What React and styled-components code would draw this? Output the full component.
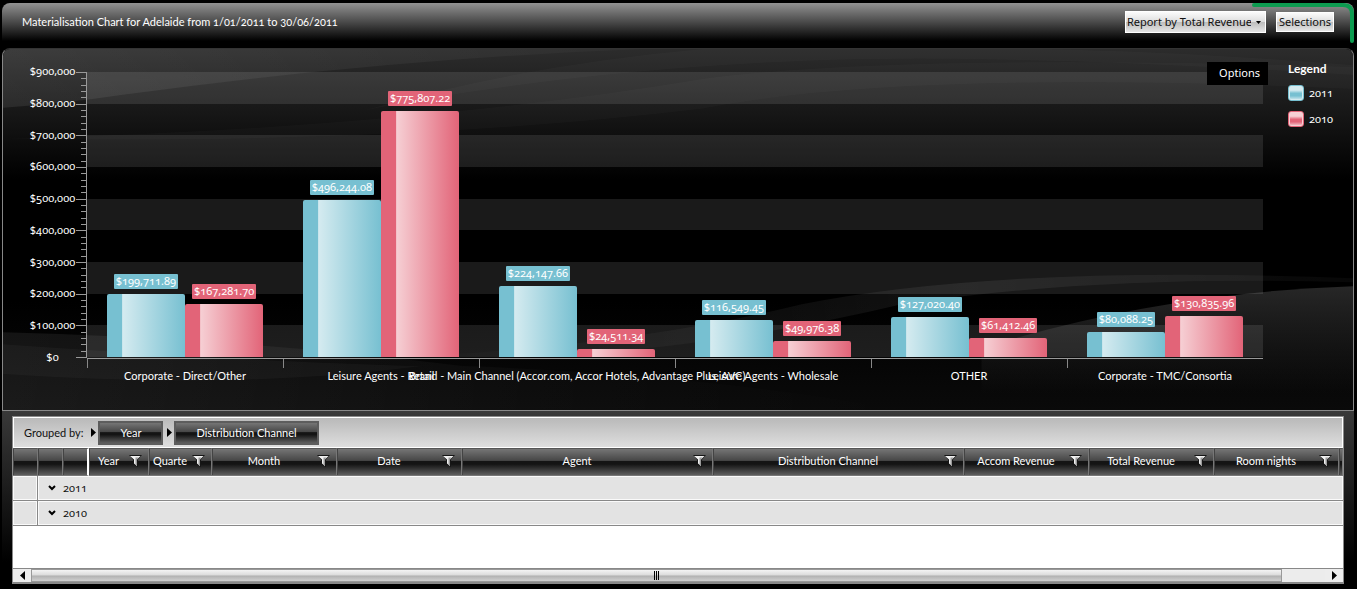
import React from 'react';
import styled, { createGlobalStyle } from 'styled-components';

const TEXT = 'Lato, "Liberation Sans", sans-serif';
const NUMBERS = '"Noto Sans", Lato, sans-serif';

const Global = createGlobalStyle`
  * { box-sizing: border-box; }
  body {
    margin: 0;
    background: #000;
    color: #fff;
    font: 11px/16px ${TEXT};
    font-variant-numeric: oldstyle-nums;
  }
  button, select { font: inherit; font-variant-numeric: inherit; }
`;

const Page = styled.div`
  display: flex;
  flex-direction: column;
  min-height: 100vh;
  padding: 3px 3px 0 2px;
`;

/* ---------- header ---------- */

const Header = styled.header`
  position: relative;
  display: flex;
  align-items: center;
  height: 38px;
  padding: 0 20px;
  border-radius: 8px 8px 0 0;
  background: linear-gradient(#929292, #4a4a4a 50%, #000);
`;

const Title = styled.h1`
  flex: 1;
  margin: 0;
  font-size: 11px;
  font-weight: 400;
`;

const HeaderTools = styled.div`
  display: flex;
  align-items: center;
  gap: 10px;
`;

const SelectWrap = styled.label`
  position: relative;
  display: flex;
  svg {
    position: absolute;
    right: 5px;
    top: 10px;
    pointer-events: none;
  }
`;

const glossyLight = 'linear-gradient(#fbfbfb, #dedede 48%, #bdbdbd 52%, #e6e6e6)';

const ReportSelect = styled.select`
  appearance: none;
  width: 141px;
  height: 22px;
  padding: 0 14px 0 1px;
  border: 1px solid #fff;
  border-radius: 0;
  color: #111;
  font-family: ${NUMBERS};
  background: ${glossyLight};
`;

const LightButton = styled.button`
  height: 20px;
  padding: 0 2px;
  border: 1px solid #fff;
  color: #111;
  font-family: ${NUMBERS};
  line-height: 16px;
  background: ${glossyLight};
`;

const CornerAccent = styled.svg`
  position: absolute;
  top: 0;
  right: 0;
`;

const HiddenText = styled.span`
  position: absolute;
  width: 1px;
  height: 1px;
  overflow: hidden;
  clip-path: inset(50%);
`;

/* ---------- chart ---------- */

const ChartPanel = styled.section`
  position: relative;
  display: grid;
  grid-template-columns: 84px 1fr 90px;
  grid-template-rows: auto 52px;
  margin-top: 7px;
  padding-top: 12px;
  border: 1px solid #888;
  border-top-color: #333;
  border-radius: 8px 8px 0 0;
  overflow: hidden;
  background: #000;
`;

const Waves = styled.svg`
  position: absolute;
  inset: 0;
  width: 100%;
  height: 100%;
`;

const Axis = styled.div`
  position: relative;
  display: flex;
  margin-top: 11px;
  padding-left: 26px;
`;

const AxisLabels = styled.div`
  flex: 1;
  display: flex;
  flex-direction: column;
  justify-content: space-between;
  margin: -8px 0;
  text-align: center;
  font-family: ${NUMBERS};
  line-height: 14px;
  padding-bottom: 2px;
  white-space: nowrap;
`;

const Ticks = styled.svg`
  width: 11px;
  height: 286px;
`;

const Plot = styled.div`
  position: relative;
  height: 285px;
  margin-top: 11px;
`;

const Bands = styled.div`
  display: flex;
  flex-direction: column;
  height: 100%;
`;

const Band = styled.div`
  flex: 1;
  background: ${(p) => (p.$lit ? 'rgba(255, 255, 255, 0.1)' : 'transparent')};
`;

const Groups = styled.div`
  position: absolute;
  inset: 0;
  display: flex;
`;

const Group = styled.div`
  flex: 1;
  display: flex;
  padding: 0 calc(100% / 60);
`;

const BarSlot = styled.div`
  flex: 1;
  display: flex;
  flex-direction: column;
  align-items: center;
  justify-content: flex-end;
`;

const series = {
  2011: { base: '#77c0d1', light: '#d5ebf0' },
  2010: { base: '#e26478', light: '#f6cfd4' },
};

const Bar = styled.div`
  flex-shrink: 0;
  width: 100%;
  border-radius: 2px 2px 0 0;
  background: ${(p) => {
    const { base, light } = series[p.$year];
    return `linear-gradient(90deg, ${base} 19%, ${light} 20%, ${base})`;
  }};
`;

const ValueTag = styled.span`
  margin-bottom: 5px;
  padding: 0 2px 2px;
  border-radius: 1px;
  font-family: ${NUMBERS};
  line-height: 13px;
  background: ${(p) => series[p.$year].base};
`;

const OptionsButton = styled.button`
  position: absolute;
  top: -10px;
  right: -5px;
  height: 23px;
  padding: 0 8px 2px 12px;
  border: 0;
  color: #fff;
  font-family: ${NUMBERS};
  background: #000;
`;

const Legend = styled.aside`
  position: relative;
  padding-left: 25px;
`;

const LegendTitle = styled.h2`
  margin: 0 0 8px;
  font-size: 12px;
  line-height: 16px;
  font-weight: 700;
`;

const LegendItem = styled.div`
  display: flex;
  align-items: center;
  gap: 5px;
  margin-bottom: 10px;
  font-family: ${NUMBERS};
  line-height: 14px;
`;

const Swatch = styled.span`
  width: 16px;
  height: 16px;
  border: 1px solid ${(p) => series[p.$year].base};
  border-radius: 3px;
  box-shadow: inset 0 0 0 1px ${(p) => series[p.$year].light};
  background: ${(p) => {
    const { base, light } = series[p.$year];
    return `linear-gradient(${light}, ${light} 30%, ${base} 52%, ${base} 70%, ${light})`;
  }};
`;

const Categories = styled.div`
  position: relative;
  grid-column: 2;
  display: flex;
  border-top: 1px solid #999;
`;

const Category = styled.div`
  flex: 1;
  min-width: 0;
`;

const CategoryTick = styled.div`
  height: 9px;
  border-left: 1px solid #888;
`;

const CategoryName = styled.div`
  display: flex;
  justify-content: center;
  white-space: nowrap;
`;

/* ---------- data grid ---------- */

const GridPanel = styled.section`
  flex: 1;
  display: flex;
  padding: 5px 10px;
  background: linear-gradient(#393939, #000 85%);
`;

const GridBox = styled.div`
  flex: 1;
  min-width: 0;
  display: flex;
  flex-direction: column;
  border: 1px solid #8a8a8a;
  background: #fff;
  color: #111;
`;

const GroupBar = styled.div`
  display: flex;
  align-items: center;
  height: 31px;
  padding: 0 10px;
  border: 1px solid #fff;
  background: linear-gradient(#b9b9b9, #dedede);
`;

const GroupLabel = styled.span`
  margin-right: 8px;
`;

const Arrow = styled.svg`
  flex-shrink: 0;
`;

const glossyDark = 'linear-gradient(#757575, #474747 44%, #141414 48%, #141414 58%, #5e5e5e)';

const GroupChip = styled.button`
  height: 24px;
  margin: 0 4px 0 2px;
  padding: 0 20px;
  border: 2px solid #5d5d5d;
  color: #fff;
  background: ${glossyDark};
`;

const Table = styled.table`
  width: 100%;
  table-layout: fixed;
  border-spacing: 0;
`;

const HeadCell = styled.th`
  height: 28px;
  padding: 0;
  border-top: 1px solid #555;
  border-right: ${(p) => (p.$divider ? '2px solid #fff' : '1px solid #777')};
  border-bottom: 1px solid #777;
  box-shadow: inset 1px 0 #444;
  color: #fff;
  font-weight: 400;
  background: ${glossyDark};
`;

const HeadInner = styled.div`
  display: flex;
  align-items: center;
  padding: 0 6px 2px 4px;
`;

const HeadLabel = styled.span`
  flex: 1;
  overflow: hidden;
  white-space: nowrap;
  text-align: center;
`;

const FilterButton = styled.button`
  display: flex;
  margin-left: 5px;
  padding: 0;
  border: 0;
  background: none;
`;

const RowMarker = styled.td`
  height: 25px;
  padding: 0;
  border-right: 1px solid #888;
  border-bottom: 1px solid #888;
  box-shadow: inset 0 0 0 1px #fafafa;
  background: #e3e3e3;
`;

const GroupCell = styled.td`
  height: 25px;
  padding: 0 10px;
  border-bottom: 1px solid #888;
  box-shadow: inset 0 0 0 1px #fafafa;
  background: #e3e3e3;
  font-family: ${NUMBERS};
`;

const Expander = styled.button`
  display: flex;
  align-items: center;
  gap: 7px;
  padding: 0;
  border: 0;
  color: #111;
  background: none;
`;

const Scrollbar = styled.div`
  display: flex;
  height: 15px;
  margin-top: auto;
  border-top: 1px solid #888;
  border-bottom: 1px solid #888;
  background: #ececec;
`;

const ScrollArrow = styled.button`
  display: flex;
  align-items: center;
  justify-content: center;
  width: 18px;
  padding: 0;
  border: 0;
  background: #ededed;
`;

const ScrollTrack = styled.div`
  flex: 1;
`;

const ScrollThumb = styled.div`
  display: flex;
  align-items: center;
  justify-content: center;
  width: calc(100% - 43px);
  height: 100%;
  border: 1px solid #fff;
  outline: 1px solid #999;
  outline-offset: -1px;
  background: linear-gradient(#f4f4f4, #dadada 48%, #b0b0b0 52%, #d0d0d0);
`;

/* ---------- data ---------- */

const MAX = 900000;
const axisValues = ['$900,000', '$800,000', '$700,000', '$600,000', '$500,000', '$400,000', '$300,000', '$200,000', '$100,000', '$0'];

const categories = [
  { name: 'Corporate - Direct/Other', 2011: 199711.89, 2010: 167281.7 },
  { name: 'Leisure Agents - Retail', 2011: 496244.08, 2010: 775807.22 },
  { name: 'Brand - Main Channel (Accor.com, Accor Hotels, Advantage Plus, AVC)', 2011: 224147.66, 2010: 24511.34 },
  { name: 'Leisure Agents - Wholesale', 2011: 116549.45, 2010: 49976.38 },
  { name: 'OTHER', 2011: 127020.4, 2010: 61412.46 },
  { name: 'Corporate - TMC/Consortia', 2011: 80088.25, 2010: 130835.96 },
];

const years = [2011, 2010];

const columns = [
  { width: 25 },
  { width: 25 },
  { width: 26, divider: true },
  { width: 60, label: 'Year' },
  { width: 63, label: 'Quarter' },
  { width: 125, label: 'Month' },
  { width: 125, label: 'Date' },
  { width: 251, label: 'Agent' },
  { width: 251, label: 'Distribution Channel' },
  { width: 125, label: 'Accom Revenue' },
  { width: 125, label: 'Total Revenue' },
  { width: 125, label: 'Room nights' },
  {},
];

const money = (v) =>
  '$' + v.toLocaleString('en-US', { minimumFractionDigits: 2, maximumFractionDigits: 2 });

/* ---------- drawings ---------- */

function Backdrop() {
  return (
    <Waves viewBox="0 0 1352 362" preserveAspectRatio="none" aria-hidden="true">
      <defs>
        <linearGradient id="base" x1="0" y1="0" x2="0" y2="1">
          <stop offset="0" stopColor="#2c2c2c" />
          <stop offset="0.2" stopColor="#141414" />
          <stop offset="0.36" stopColor="#000" />
          <stop offset="0.7" stopColor="#000" />
          <stop offset="1" stopColor="#0a0a0a" />
        </linearGradient>
        <linearGradient id="sweep" x1="0" y1="0" x2="1" y2="0">
          <stop offset="0" stopColor="#fff" stopOpacity="0.08" />
          <stop offset="1" stopColor="#fff" stopOpacity="0.02" />
        </linearGradient>
        <linearGradient id="floor" x1="0" y1="0" x2="1" y2="0">
          <stop offset="0" stopColor="#fff" stopOpacity="0.07" />
          <stop offset="0.6" stopColor="#fff" stopOpacity="0.02" />
          <stop offset="1" stopColor="#fff" stopOpacity="0" />
        </linearGradient>
        <linearGradient id="hill" x1="0" y1="0" x2="0" y2="1">
          <stop offset="0" stopColor="#272727" />
          <stop offset="1" stopColor="#272727" stopOpacity="0" />
        </linearGradient>
        <linearGradient id="ribbon" x1="0" y1="0" x2="1" y2="0">
          <stop offset="0" stopColor="#fff" stopOpacity="0" />
          <stop offset="0.6" stopColor="#fff" stopOpacity="0.07" />
          <stop offset="1" stopColor="#fff" stopOpacity="0.03" />
        </linearGradient>
      </defs>
      <rect width="1352" height="362" fill="url(#base)" />
      <path d="M0 59Q60 55 120 46Q380 10 640 0H0Z" fill="url(#sweep)" />
      <path d="M360 62Q560 22 800 12Q1000 4 1352 26V16Q1100 -4 900 0H700Q520 16 360 62Z" fill="#fff" fillOpacity="0.02" />
      <path d="M0 90Q400 80 700 30Q900 4 1352 18V40Q900 20 700 60Q400 96 0 90Z" fill="#fff" fillOpacity="0.02" />
      <path d="M0 284Q240 290 460 318Q700 326 900 362H0Z" fill="url(#floor)" />
      <path d="M0 296Q260 314 420 318Q240 342 0 326Z" fill="#fff" fillOpacity="0.03" />
      <path d="M380 310Q620 300 800 256Q1000 216 1352 230V234Q1100 226 900 256Q640 318 380 310Z" fill="url(#ribbon)" />
      <path d="M980 300Q1160 244 1352 238V345H980Z" fill="url(#hill)" />
    </Waves>
  );
}

function AxisTicks() {
  return (
    <Ticks viewBox="0 0 11 286" preserveAspectRatio="none" stroke="#999" shapeRendering="crispEdges" aria-hidden="true">
      <path d="M10.5 0V286" />
      {Array.from({ length: 46 }, (_, i) => {
        const y = Math.round((i * 285) / 45) + 0.5;
        return <path key={i} d={`M${i % 5 ? 5 : 0} ${y}H11`} />;
      })}
    </Ticks>
  );
}

function Funnel() {
  return (
    <svg width="13" height="12" viewBox="0 0 13 12" aria-hidden="true">
      <path d="M0 0H13L9 4.5V12L4 9V4.5Z" fill="#161616" />
      <path d="M1 1H11.5L8 4.5V11L5 8.5V4.5Z" fill="#f0f0f0" />
      <path d="M6.5 2.5H9.5L8 4.5V11L6.5 9.8Z" fill="#999" />
    </svg>
  );
}

function Triangle({ left }) {
  return (
    <Arrow width="5" height="9" viewBox="0 0 5 9" aria-hidden="true">
      <path d={left ? 'M5 0V9L0 4.5Z' : 'M0 0V9L5 4.5Z'} fill="#000" />
    </Arrow>
  );
}

export default function App() {
  return (
    <>
      <Global />
      <Page>
        <Header>
          <Title>Materialisation Chart for Adelaide from 1/01/2011 to 30/06/2011</Title>
          <HeaderTools>
            <SelectWrap>
              <HiddenText>Report type</HiddenText>
              <ReportSelect defaultValue="revenue">
                <option value="revenue">Report by Total Revenue</option>
              </ReportSelect>
              <svg width="5" height="3" viewBox="0 0 5 3" aria-hidden="true">
                <path d="M0 0H5L2.5 3Z" fill="#000" />
              </svg>
            </SelectWrap>
            <LightButton type="button">Selections</LightButton>
          </HeaderTools>
          <CornerAccent width="102" height="40" viewBox="0 0 102 40" aria-hidden="true">
            <path d="M2 2H91Q100 2 100 11V38" fill="none" stroke="#0c9b50" strokeWidth="4" strokeLinecap="round" />
          </CornerAccent>
        </Header>

        <ChartPanel>
          <Backdrop />
          <Axis>
            <AxisLabels>
              {axisValues.map((v) => <span key={v}>{v}</span>)}
            </AxisLabels>
            <AxisTicks />
          </Axis>
          <Plot>
            <Bands>
              {Array.from({ length: 9 }, (_, i) => <Band key={i} $lit={i % 2 === 0} />)}
            </Bands>
            <Groups>
              {categories.map((c) => (
                <Group key={c.name}>
                  {years.map((y) => (
                    <BarSlot key={y}>
                      <ValueTag $year={y}>{money(c[y])}</ValueTag>
                      <Bar $year={y} style={{ height: `${(c[y] / MAX) * 100}%` }} />
                    </BarSlot>
                  ))}
                </Group>
              ))}
            </Groups>
            <OptionsButton type="button">Options</OptionsButton>
          </Plot>
          <Legend>
            <LegendTitle>Legend</LegendTitle>
            {years.map((y) => (
              <LegendItem key={y}><Swatch $year={y} />{y}</LegendItem>
            ))}
          </Legend>
          <Categories>
            {categories.map((c) => (
              <Category key={c.name}>
                <CategoryTick />
                <CategoryName>{c.name}</CategoryName>
              </Category>
            ))}
          </Categories>
        </ChartPanel>

        <GridPanel>
          <GridBox>
            <GroupBar>
              <GroupLabel>Grouped by:</GroupLabel>
              <Triangle />
              <GroupChip type="button">Year</GroupChip>
              <Triangle />
              <GroupChip type="button">Distribution Channel</GroupChip>
            </GroupBar>
            <Table>
              <colgroup>
                {columns.map((c, i) => <col key={i} width={c.width} />)}
              </colgroup>
              <thead>
                <tr>
                  {columns.map((c, i) => (
                    <HeadCell key={i} $divider={c.divider}>
                      {c.label && (
                        <HeadInner>
                          <HeadLabel>{c.label}</HeadLabel>
                          <FilterButton type="button" aria-label={`Filter ${c.label}`}><Funnel /></FilterButton>
                        </HeadInner>
                      )}
                    </HeadCell>
                  ))}
                </tr>
              </thead>
              <tbody>
                {years.map((y) => (
                  <tr key={y}>
                    <RowMarker />
                    <GroupCell colSpan={12}>
                      <Expander type="button">
                        <svg width="8" height="6" viewBox="0 0 8 6" aria-hidden="true">
                          <path d="M1 1L4 4L7 1" fill="none" stroke="#000" strokeWidth="2" />
                        </svg>
                        {y}
                      </Expander>
                    </GroupCell>
                  </tr>
                ))}
              </tbody>
            </Table>
            <Scrollbar>
              <ScrollArrow type="button" aria-label="Scroll left"><Triangle left /></ScrollArrow>
              <ScrollTrack>
                <ScrollThumb>
                  <svg width="5" height="9" viewBox="0 0 5 9" shapeRendering="crispEdges" aria-hidden="true">
                    <path d="M0.5 0V9M2.5 0V9M4.5 0V9" stroke="#000" />
                  </svg>
                </ScrollThumb>
              </ScrollTrack>
              <ScrollArrow type="button" aria-label="Scroll right"><Triangle /></ScrollArrow>
            </Scrollbar>
          </GridBox>
        </GridPanel>
      </Page>
    </>
  );
}
